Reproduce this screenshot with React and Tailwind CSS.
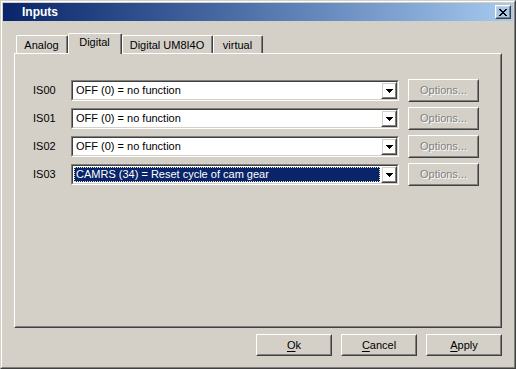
import React from "react";

// classic raised bevel: white / #404040 outside, face / #808080 inside
const Raised = ({ className = "", inner = "", children }) => (
  <div className={`border border-t-white border-l-white border-r-[#404040] border-b-[#404040] ${className}`}>
    <div className={`h-full w-full border border-t-[#d4d0c8] border-l-[#d4d0c8] border-r-[#808080] border-b-[#808080] ${inner}`}>
      {children}
    </div>
  </div>
);

const Arrow = () => (
  <svg width="7" height="4" viewBox="0 0 7 4" shapeRendering="crispEdges">
    <path d="M0 0h7v1H0zM1 1h5v1H1zM2 2h3v1H2zM3 3h1v1H3z" fill="#000" />
  </svg>
);

const CloseGlyph = () => (
  <svg width="8" height="7" viewBox="0 0 8 7" shapeRendering="crispEdges">
    {[0, 1, 2, 3, 4, 5, 6].map((i) => (
      <g key={i} fill="#000">
        <rect x={i} y={i} width="2" height="1" />
        <rect x={6 - i} y={i} width="2" height="1" />
      </g>
    ))}
  </svg>
);

const Combo = ({ value, selected }) => (
  <div className="w-[328px] h-[21px] border border-t-[#808080] border-l-[#808080] border-r-white border-b-white">
    <div className="h-full flex bg-white border border-t-[#404040] border-l-[#404040] border-r-[#d4d0c8] border-b-[#d4d0c8]">
      <div className="flex-1 min-w-0 p-px">
        <div
          className={
            selected
              ? "h-full flex items-center pl-px whitespace-nowrap overflow-hidden bg-[#0a246a] text-white border border-dotted border-[#e6e6b4]"
              : "h-full flex items-center pl-px whitespace-nowrap overflow-hidden border border-transparent"
          }
        >
          {value}
        </div>
      </div>
      <Raised className="w-[16px] h-full shrink-0" inner="flex items-center justify-center">
        <Arrow />
      </Raised>
    </div>
  </div>
);

const rows = [
  { id: "IS00", value: "OFF (0) = no function" },
  { id: "IS01", value: "OFF (0) = no function" },
  { id: "IS02", value: "OFF (0) = no function" },
  { id: "IS03", value: "CAMRS (34) = Reset cycle of cam gear", selected: true },
];

const tabs = [
  { label: "Analog", w: "w-[52px]" },
  { label: "Digital", w: "w-[54px]", active: true },
  { label: "Digital UM8I4O", w: "w-[91px]" },
  { label: "virtual", w: "w-[50px]" },
];

export default function App() {
  return (
    <div className="w-[516px] h-[369px] bg-[#d4d0c8] text-black text-[11px] leading-none font-['Liberation_Sans',Arial,sans-serif] border border-t-[#d4d0c8] border-l-[#d4d0c8] border-r-[#404040] border-b-[#404040]">
      <div className="h-full flex flex-col p-px border border-t-white border-l-white border-r-[#808080] border-b-[#808080]">
        {/* Title bar */}
        <div className="h-[18px] shrink-0 flex items-center justify-between pl-[19px] pr-[2px] bg-linear-to-r from-[#0a246a] to-[#a6caf0]">
          <span className="text-white font-bold text-[12px]">Inputs</span>
          <Raised className="w-[16px] h-[14px]" inner="flex items-center justify-center">
            <CloseGlyph />
          </Raised>
        </div>

        <div className="flex-1 flex flex-col px-[11px] pt-[12px]">
          {/* Tabs */}
          <div className="h-[20px] flex items-end pl-[2px]">
            {tabs.map((t) =>
              t.active ? (
                <div
                  key={t.label}
                  className={`${t.w} h-[21px] -mb-px relative z-10 bg-[#d4d0c8] rounded-t-[2px] border-l border-t border-r border-l-white border-t-white border-r-[#404040]`}
                >
                  <div className="h-full flex items-center justify-center pb-[3px] border-r border-r-[#808080]">
                    {t.label}
                  </div>
                </div>
              ) : (
                <div
                  key={t.label}
                  className={`${t.w} h-[18px] bg-[#d4d0c8] rounded-t-[2px] border-l border-t border-r border-l-white border-t-white border-r-[#404040]`}
                >
                  <div className="h-full flex items-center justify-center pt-px border-r border-r-[#808080]">
                    {t.label}
                  </div>
                </div>
              )
            )}
          </div>

          {/* Panel */}
          <Raised className="h-[275px]" inner="flex flex-col gap-[5px] pt-[24px] pl-[17px]">
            {rows.map((r) => (
              <div key={r.id} className="h-[23px] flex items-center">
                <span className="w-[38px]">{r.id}</span>
                <Combo value={r.value} selected={r.selected} />
                <Raised className="ml-[9px] w-[71px] h-[23px]" inner="flex items-center justify-center">
                  <span className="text-[#808080] [text-shadow:1px_1px_0_#fff]">Options...</span>
                </Raised>
              </div>
            ))}
          </Raised>

          {/* Buttons */}
          <div className="mt-[6px] flex justify-end gap-[9px]">
            {[
              ["O", "k"],
              ["C", "ancel"],
              ["A", "pply"],
            ].map(([a, b]) => (
              <Raised key={a} className="w-[76px] h-[22px]" inner="flex items-center justify-center">
                <span>
                  <span className="underline underline-offset-[2px]">{a}</span>
                  {b}
                </span>
              </Raised>
            ))}
          </div>
        </div>
      </div>
    </div>
  );
}
